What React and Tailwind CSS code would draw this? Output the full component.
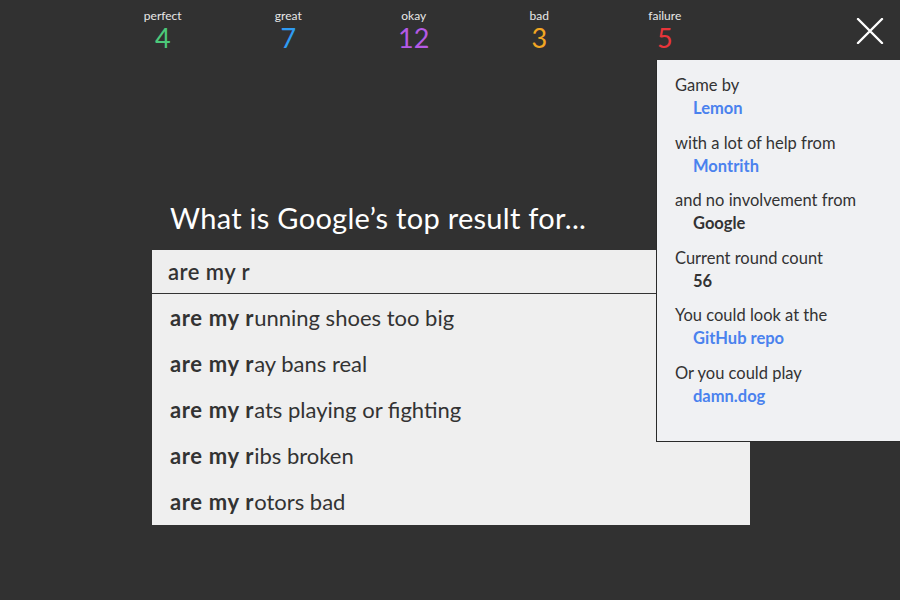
import React from 'react';

const scores = [
  { label: 'perfect', value: 4, color: 'text-[#4cc97a]' },
  { label: 'great', value: 7, color: 'text-[#2f9bf2]' },
  { label: 'okay', value: 12, color: 'text-[#b55ae6]' },
  { label: 'bad', value: 3, color: 'text-[#f2a623]' },
  { label: 'failure', value: 5, color: 'text-[#e8353a]' },
];

const suggestions = ['unning shoes too big', 'ay bans real', 'ats playing or fighting', 'ibs broken', 'otors bad'];

const credits = [
  { text: 'Game by', name: 'Lemon', link: true },
  { text: 'with a lot of help from', name: 'Montrith', link: true },
  { text: 'and no involvement from', name: 'Google', link: false },
  { text: 'Current round count', name: '56', link: false },
  { text: 'You could look at the', name: 'GitHub repo', link: true },
  { text: 'Or you could play', name: 'damn.dog', link: true },
];

export default function App() {
  return (
    <div className="w-[900px] h-[600px] bg-[#313131] overflow-hidden relative" style={{ fontFamily: 'Lato, "Open Sans", sans-serif' }}>
      <div className="flex pl-[100px] pt-[9px]">
        {scores.map((s) => (
          <div key={s.label} className="w-[125.5px] flex flex-col items-center">
            <div className="text-[12px] leading-[14px] text-[#e8e8e8]">{s.label}</div>
            <div className={`text-[27px] leading-[22px] mt-[4px] ${s.color}`}>{s.value}</div>
          </div>
        ))}
      </div>

      <button className="absolute top-[18px] left-[856px] w-[28px] h-[26px]">
        <svg viewBox="0 0 28 26" width="28" height="26">
          <path d="M2 1 L26 25 M26 1 L2 25" stroke="#fff" strokeWidth="2.4" strokeLinecap="round" />
        </svg>
      </button>

      <div className="pl-[152px] pt-[150px]">
        <h1 className="pl-[18px] text-[29px] leading-[38px] tracking-[0.01em] text-white mb-[13px]">What is Google’s top result for...</h1>
        <div className="w-[598px]">
          <div className="h-[44px] bg-[#eeeeee] border-b border-[#333] flex items-center pl-[16px] text-[22px] font-semibold tracking-[0.02em] text-[#333]">are my r</div>
          <div className="bg-[#efefef] pb-[1px]">
            {suggestions.map((s) => (
              <div key={s} className="h-[46px] flex items-center pl-[18px] text-[22px] text-[#333]">
                <span className="font-bold tracking-[0.03em] whitespace-pre">are my r</span>
                <span>{s}</span>
              </div>
            ))}
          </div>
        </div>
      </div>

      <div className="absolute top-[60px] left-[656px] w-[244px] h-[382px] bg-[#f0f1f3] border-l border-b border-[#2a2a2a] pt-[14px] pl-[18px] text-[16.5px] text-[#333]">
        {credits.map((c) => (
          <div key={c.text} className="mb-[11.6px]">
            <div className="leading-[23px]">{c.text}</div>
            <div className={`leading-[23px] pl-[18px] font-bold ${c.link ? 'text-[#4a82ee]' : 'text-[#333]'}`}>{c.name}</div>
          </div>
        ))}
      </div>
    </div>
  );
}
